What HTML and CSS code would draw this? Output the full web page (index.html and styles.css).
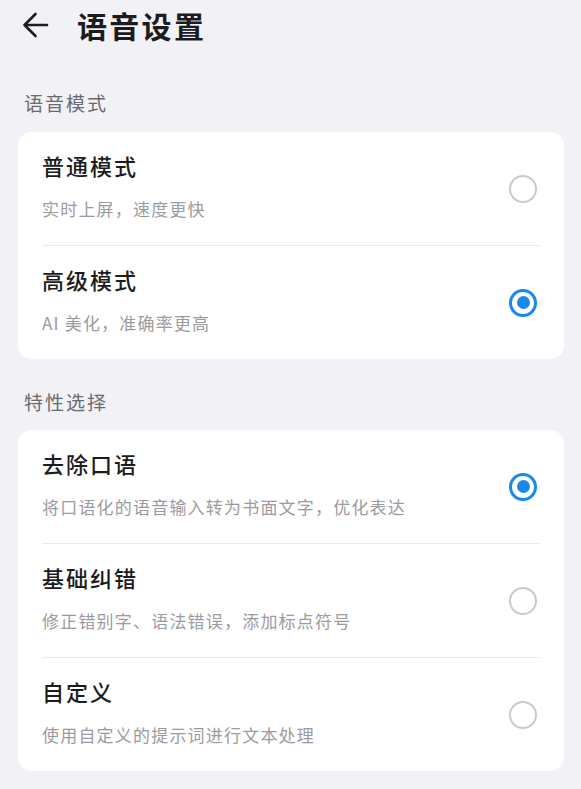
FILE: index.html
```html
<!DOCTYPE html>
<html lang="zh-CN">
<head>
<meta charset="utf-8">
<title>语音设置</title>
<link rel="stylesheet" href="styles.css">
</head>
<body>
<div class="page">
  <header class="header">
    <svg class="back" width="28" height="28" viewBox="0 0 28 28" aria-hidden="true">
      <path d="M26 14H3.5M14.5 3L3.5 14l11 11" fill="none" stroke="#1c1c1e" stroke-width="2.6" stroke-linecap="round" stroke-linejoin="round"/>
    </svg>
    <h1 class="title">语音设置</h1>
  </header>

  <div class="section-label first">语音模式</div>
  <div class="card">
    <div class="item">
      <div class="texts">
        <div class="item-title">普通模式</div>
        <div class="item-sub">实时上屏，速度更快</div>
      </div>
      <span class="radio"></span>
    </div>
    <div class="divider"></div>
    <div class="item">
      <div class="texts">
        <div class="item-title">高级模式</div>
        <div class="item-sub">AI 美化，准确率更高</div>
      </div>
      <span class="radio checked"></span>
    </div>
  </div>

  <div class="section-label second">特性选择</div>
  <div class="card">
    <div class="item">
      <div class="texts">
        <div class="item-title">去除口语</div>
        <div class="item-sub">将口语化的语音输入转为书面文字，优化表达</div>
      </div>
      <span class="radio checked"></span>
    </div>
    <div class="divider"></div>
    <div class="item">
      <div class="texts">
        <div class="item-title">基础纠错</div>
        <div class="item-sub">修正错别字、语法错误，添加标点符号</div>
      </div>
      <span class="radio"></span>
    </div>
    <div class="divider"></div>
    <div class="item">
      <div class="texts">
        <div class="item-title">自定义</div>
        <div class="item-sub">使用自定义的提示词进行文本处理</div>
      </div>
      <span class="radio"></span>
    </div>
  </div>
</div>
</body>
</html>
```

FILE: styles.css
```css
html, body {
  margin: 0;
  padding: 0;
  background: #f2f2f6;
}

body {
  font-family: "Noto Sans CJK SC", "Noto Sans", sans-serif;
  color: #1c1c1e;
}

.page {
  display: flex;
  flex-direction: column;
}

.header {
  display: flex;
  align-items: center;
  height: 50px;
  padding-left: 21px;
  gap: 28px;
}

.back {
  display: block;
  margin-top: 0;
}

.title {
  margin: 0;
  font-size: 30px;
  line-height: 50px;
  font-weight: 700;
  letter-spacing: 2.3px;
  color: #1c1c1e;
}

.section-label {
  padding-left: 24px;
  font-size: 19px;
  line-height: 24px;
  letter-spacing: 2px;
  color: #6a6a6e;
  margin-bottom: 17px;
}

.section-label.first {
  margin-top: 41px;
}

.section-label.second {
  margin-top: 31px;
  margin-bottom: 16px;
}

.card {
  margin: 0 17px 0 18px;
  background: #ffffff;
  border-radius: 14px;
  display: flex;
  flex-direction: column;
}

.item {
  height: 113px;
  display: flex;
  align-items: center;
  justify-content: space-between;
  padding: 0 27px 0 24px;
}

.texts {
  display: flex;
  flex-direction: column;
  padding-bottom: 6px;
}

.item-title {
  font-size: 22px;
  line-height: 30px;
  font-weight: 500;
  letter-spacing: 2px;
  color: #1c1c1e;
}

.item-sub {
  margin-top: 17px;
  font-size: 17px;
  line-height: 24px;
  letter-spacing: 1.2px;
  color: #9b9b9f;
}

.divider {
  height: 1px;
  margin: 0 24px;
  background: #e8e8ed;
}

.radio {
  box-sizing: border-box;
  width: 28px;
  height: 28px;
  border-radius: 50%;
  border: 2.5px solid #cacacd;
  display: flex;
  align-items: center;
  justify-content: center;
  flex-shrink: 0;
}

.radio.checked {
  border: 3px solid #1b88ee;
}

.radio.checked::after {
  content: "";
  width: 13px;
  height: 13px;
  border-radius: 50%;
  background: #1b88ee;
}
```
